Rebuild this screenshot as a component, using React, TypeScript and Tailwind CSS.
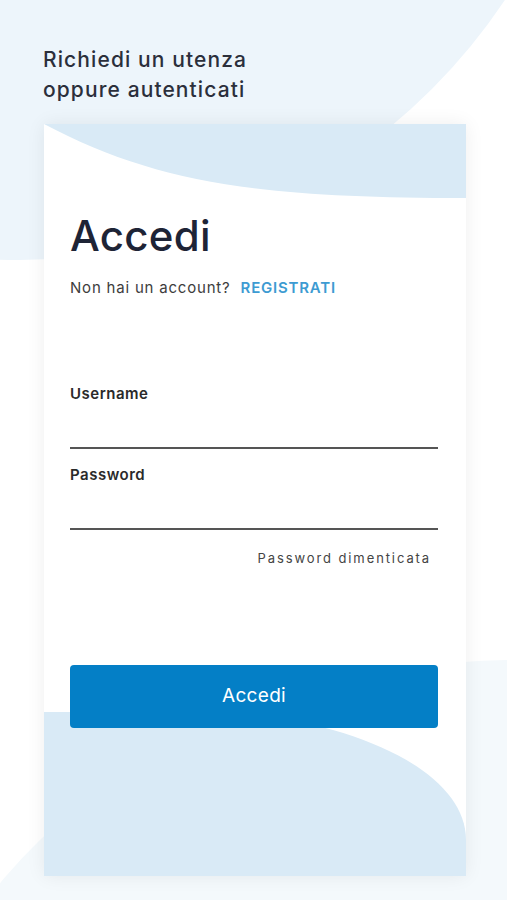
export default function App() {
  return (
    <div className="relative w-[507px] h-[900px] overflow-hidden bg-white font-['Inter',sans-serif]">
      {/* Page background blobs */}
      <svg className="absolute inset-0 w-[507px] h-[900px]" viewBox="0 0 507 900">
        <circle cx="19" cy="-324" r="584" fill="#edf5fb" />
        <ellipse cx="520" cy="1150" rx="620" ry="490" fill="#f4f9fc" />
      </svg>

      <div className="relative pt-[45px]">
        <div className="pl-[43px] text-[21px] leading-[30px] text-[#2b2f3b] font-medium tracking-[1.1px]">
          <p>Richiedi un utenza</p>
          <p>oppure autenticati</p>
        </div>

        {/* Login card */}
        <div className="relative ml-[44px] mt-[19px] w-[422px] h-[752px] bg-white overflow-hidden shadow-[0_0_18px_rgba(0,0,0,0.07)]">
          <svg className="absolute inset-0 w-[422px] h-[752px]" viewBox="0 0 422 752">
            <path d="M0,0 C110,58 210,74 422,74 L422,0 Z" fill="#d9eaf6" />
            <path d="M0,588 L190,588 C320,600 422,650 422,716 L422,752 L0,752 Z" fill="#d9eaf6" />
          </svg>

          <div className="relative pl-[26px] pr-[28px] pt-[91px]">
            <h1 className="text-[42px] leading-none font-medium text-[#1e2436] tracking-[0.3px]">Accedi</h1>

            <div className="mt-[21px] flex items-center gap-[10px] text-[15px] leading-[20px]">
              <span className="text-[#3d3d3d] tracking-[0.8px]">Non hai un account?</span>
              <span className="text-[#3d9bd2] font-semibold tracking-[0.8px]">REGISTRATI</span>
            </div>

            <label className="block mt-[86px] text-[15px] leading-[20px] font-semibold text-[#2a2a2a] tracking-[0.5px]">Username</label>
            <div className="h-[45px] border-b-2 border-[#555555]" />

            <label className="block mt-[16px] text-[15px] leading-[20px] font-semibold text-[#2a2a2a] tracking-[0.5px]">Password</label>
            <div className="h-[45px] border-b-2 border-[#555555]" />

            <p className="mt-[19px] pr-[7px] text-right text-[13px] leading-[18px] tracking-[1.9px] text-[#444444]">
              Password dimenticata
            </p>

            <button className="mt-[98px] w-full h-[63px] rounded-[4px] bg-[#047fc6] text-white text-[19px] tracking-[0.3px]">
              Accedi
            </button>
          </div>
        </div>
      </div>
    </div>
  );
}
